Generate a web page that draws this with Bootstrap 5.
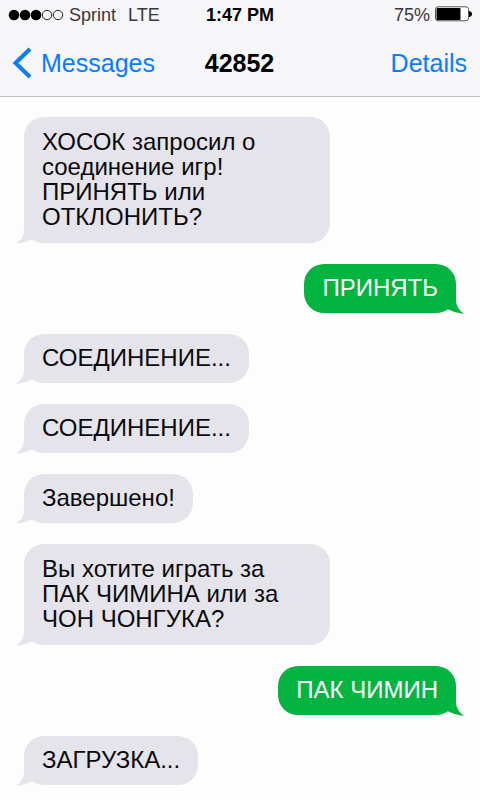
<!DOCTYPE html>
<html lang="ru">
<head>
<meta charset="utf-8">
<meta name="viewport" content="width=device-width, initial-scale=1">
<title>Messages</title>
<link href="https://cdn.jsdelivr.net/npm/bootstrap@5.3.0/dist/css/bootstrap.min.css" rel="stylesheet">
<style>
  body { font-family: "Liberation Sans", Arial, sans-serif; background: #fdfdfd; color: #0a0a0e; }
  .phone-head { background: #f6f5f8; border-bottom: 1px solid #bfbfc3; color: #000; padding-bottom: 16px; }
  .split { display: grid; grid-template-columns: 1fr auto 1fr; align-items: center; }
  .status-line { font-size: 18px; line-height: 30px; padding: 0 8px; color: #38383a; }
  .status-line strong { color: #000; }
  .title-line { font-size: 25px; line-height: 34px; padding: 16px 13px 0 12px; }
  .title-line h1 { font-size: 25px; line-height: 34px; font-weight: 700; }
  .title-line a { color: #0a7cff; }
  .signal { margin-right: 5px; }
  .back { gap: 9px; }
  .thread { gap: 21px; padding: 20px 24px 14px; }
  .bubble { position: relative; max-width: 306px; padding: 11px 18px 13px; border-radius: 20px; font-size: 24px; line-height: 25px; }
  .multiline { padding-top: 12px; padding-bottom: 14px; }
  .incoming { background: #e5e4ea; }
  .outgoing { background: #03b441; color: #fff; }
  .tail { position: absolute; bottom: -1px; width: 24px; height: 24px; }
  .incoming .tail { left: -8px; fill: #e5e4ea; }
  .outgoing .tail { right: -8px; fill: #03b441; transform: scaleX(-1); }
</style>
</head>
<body>
<svg class="d-none" aria-hidden="true">
  <symbol id="tail" viewBox="0 0 24 24"><path d="M8 0V10Q8 18 0 24Q9 23 17 19L24 12V0Z"/></symbol>
</svg>

<header class="phone-head">
  <div class="split status-line">
    <div class="d-flex align-items-center">
      <svg class="signal" width="56" height="12" viewBox="0 0 56 12" role="img" aria-label="Signal">
        <g fill="#000"><circle cx="6" cy="6" r="5.3"/><circle cx="17" cy="6" r="5.3"/><circle cx="28" cy="6" r="5.3"/></g>
        <g fill="none" stroke="#222" stroke-width="1"><circle cx="39" cy="6" r="4.7"/><circle cx="50" cy="6" r="4.7"/></g>
      </svg>
      <span>Sprint</span><span class="ms-2 ps-1">LTE</span>
    </div>
    <strong>1:47 PM</strong>
    <div class="d-flex align-items-center justify-content-end">
      <span class="me-1">75%</span>
      <svg width="38" height="18" viewBox="0 0 38 18" role="img" aria-label="Battery">
        <rect x="1.5" y=".8" width="33" height="14" rx="2.5" fill="#fff" stroke="#555" stroke-width="1"/>
        <rect x="2.500" y="2" width="24" height="12" rx="1" fill="#000"/>
        <path d="M35 5Q38 5.500 38 8T35 11Z" fill="#000"/>
      </svg>
    </div>
  </div>
  <nav class="split title-line">
    <a href="#" class="back d-flex align-items-center text-decoration-none">
      <svg width="20" height="32" viewBox="0 0 20 32" aria-hidden="true"><path d="M18 2 3.500 16 18 30" fill="none" stroke="#0a7cff" stroke-width="4"/></svg>
      <span>Messages</span>
    </a>
    <h1 class="m-0">42852</h1>
    <a href="#" class="text-end text-decoration-none">Details</a>
  </nav>
</header>

<main class="thread d-flex flex-column">
  <div class="bubble multiline incoming align-self-start">ХОСОК запросил о соединение игр! ПРИНЯТЬ или ОТКЛОНИТЬ?<svg class="tail" aria-hidden="true"><use href="#tail"/></svg></div>
  <div class="bubble outgoing align-self-end">ПРИНЯТЬ<svg class="tail" aria-hidden="true"><use href="#tail"/></svg></div>
  <div class="bubble incoming align-self-start">СОЕДИНЕНИЕ...<svg class="tail" aria-hidden="true"><use href="#tail"/></svg></div>
  <div class="bubble incoming align-self-start">СОЕДИНЕНИЕ...<svg class="tail" aria-hidden="true"><use href="#tail"/></svg></div>
  <div class="bubble incoming align-self-start">Завершено!<svg class="tail" aria-hidden="true"><use href="#tail"/></svg></div>
  <div class="bubble multiline incoming align-self-start">Вы хотите играть за ПАК ЧИМИНА или за ЧОН ЧОНГУКА?<svg class="tail" aria-hidden="true"><use href="#tail"/></svg></div>
  <div class="bubble outgoing align-self-end">ПАК ЧИМИН<svg class="tail" aria-hidden="true"><use href="#tail"/></svg></div>
  <div class="bubble incoming align-self-start">ЗАГРУЗКА...<svg class="tail" aria-hidden="true"><use href="#tail"/></svg></div>
</main>
<script src="https://cdn.jsdelivr.net/npm/bootstrap@5.3.0/dist/js/bootstrap.bundle.min.js"></script>
</body>
</html>
